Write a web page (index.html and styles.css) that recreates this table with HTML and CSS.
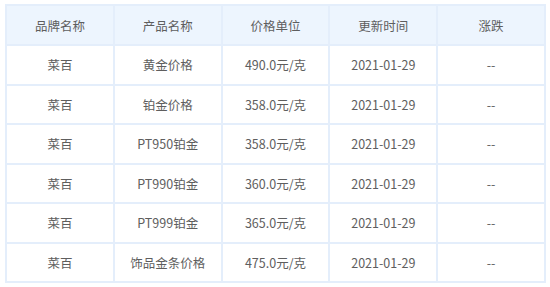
FILE: index.html
```html
<!DOCTYPE html>
<html lang="zh-CN">
<head>
    <meta charset="UTF-8">
    <meta name="viewport" content="width=device-width, initial-scale=1.0">
    <title>菜百金价</title>
    <link rel="stylesheet" href="styles.css">
</head>
<body>
<table class="price-table">
  <thead>
    <tr>
      <th>品牌名称</th>
      <th>产品名称</th>
      <th>价格单位</th>
      <th>更新时间</th>
      <th>涨跌</th>
    </tr>
  </thead>
  <tbody>
    <tr><td>菜百</td><td>黄金价格</td><td>490.0元/克</td><td>2021-01-29</td><td>--</td></tr>
    <tr><td>菜百</td><td>铂金价格</td><td>358.0元/克</td><td>2021-01-29</td><td>--</td></tr>
    <tr><td>菜百</td><td>PT950铂金</td><td>358.0元/克</td><td>2021-01-29</td><td>--</td></tr>
    <tr><td>菜百</td><td>PT990铂金</td><td>360.0元/克</td><td>2021-01-29</td><td>--</td></tr>
    <tr><td>菜百</td><td>PT999铂金</td><td>365.0元/克</td><td>2021-01-29</td><td>--</td></tr>
    <tr><td>菜百</td><td>饰品金条价格</td><td>475.0元/克</td><td>2021-01-29</td><td>--</td></tr>
  </tbody>
</table>
</body>
</html>
```

FILE: styles.css
```css
body {
  margin: 0;
  padding: 4px 4px 0 5px;
  font-family: "Noto Sans CJK SC", "Open Sans", sans-serif;
  font-size: 12.5px;
  color: #5e5e5e;
  background: #fff;
}

.price-table {
  width: 541px;
  border-collapse: collapse;
  table-layout: fixed;
  border: 2px solid #e4eefb;
}

.price-table th,
.price-table td {
  border: 2px solid #e4eefb;
  text-align: center;
  padding: 0;
}

.price-table th {
  height: 38px;
  font-weight: normal;
  background: #edf5fe;
}

.price-table td {
  height: 37.5px;
}
```
